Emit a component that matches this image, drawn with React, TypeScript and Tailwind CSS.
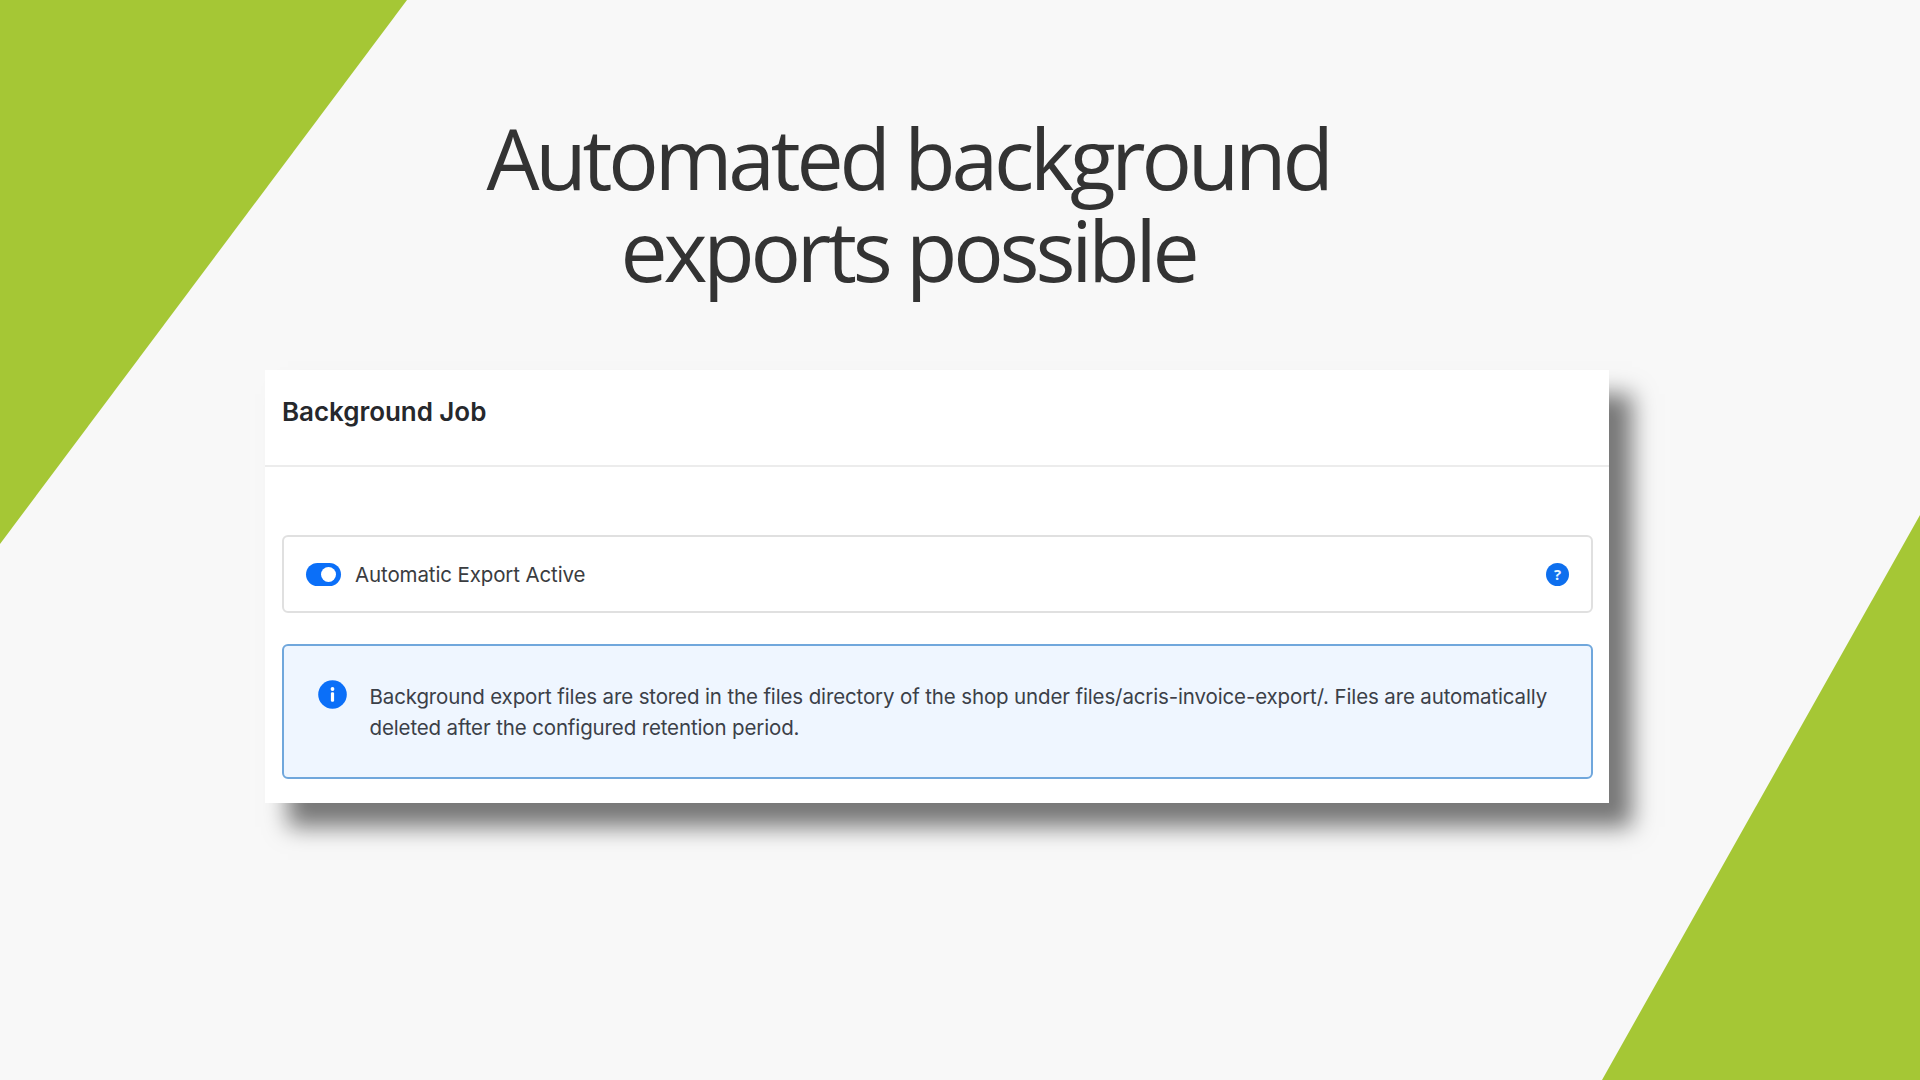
const Toggle = () => {
  return (
    <div className="mt-px flex h-[23px] w-[35px] shrink-0 items-center justify-end rounded-full bg-[#0b6ff8] pr-[5px]">
      <div className="h-[15px] w-[15px] rounded-full bg-white" />
    </div>
  );
};

const HelpIcon = () => {
  return (
    <div className="mt-px flex h-[23px] w-[23px] items-center justify-center rounded-full bg-[#0e6fee] font-['Open_Sans',sans-serif] text-[15px] font-bold leading-none text-[#e6f5ff]">
      ?
    </div>
  );
};

const InfoIcon = () => {
  return (
    <svg className="h-[29px] w-[29px] shrink-0" viewBox="0 0 29 29">
      <circle cx="14.5" cy="14.5" r="14.3" fill="#0b6ff8" />
      <circle cx="14.5" cy="9" r="1.9" fill="#fff" />
      <rect x="12.9" y="12.2" width="3.2" height="9.6" rx="1.3" fill="#fff" />
    </svg>
  );
};

const App = () => {
  return (
    <div className="relative h-[1080px] w-[1920px] overflow-hidden bg-[#f8f8f8] font-['Inter',sans-serif]">
      {/* Corner shapes */}
      <div className="absolute left-0 top-0 h-[544px] w-[407px] bg-[#a5c735] [clip-path:polygon(0_0,100%_0,0_100%)]" />
      <div className="absolute bottom-0 right-0 h-[565px] w-[318px] bg-[#a5c735] [clip-path:polygon(100%_0,100%_100%,0_100%)]" />

      <div className="relative ml-[265px] w-[1344px] pt-[112px]">
        <h1 className="mr-[58px] h-[258px] text-center font-['Open_Sans',sans-serif] text-[84px] leading-[92px] tracking-[-0.05em] text-[#333333]">
          Automated background
          <br />
          exports possible
        </h1>

        {/* Settings card */}
        <div className="h-[433px] bg-white shadow-[23px_24px_22px_rgba(0,0,0,0.52)]">
          <div className="flex h-[97px] items-start border-b-2 border-[#ececec] pl-[17px] pt-[26px]">
            <h2 className="text-[26px] font-semibold leading-[32px] tracking-[-0.05px] text-[#26282c]">Background Job</h2>
          </div>

          <div className="flex flex-col gap-[31px] pl-[17px] pr-[16px] pt-[68px]">
            <div className="flex h-[78px] items-center rounded-[6px] border-2 border-[#e0e0e0] px-[22px]">
              <Toggle />
              <span className="ml-[14px] flex-1 pt-[2px] text-[20.5px] leading-[30px] tracking-[-0.12px] text-[#3a3c40]">
                Automatic Export Active
              </span>
              <HelpIcon />
            </div>

            <div className="flex h-[135px] items-start rounded-[6px] border-2 border-[#70a7dc] bg-[#eff6ff] pl-[34px] pt-[34px]">
              <InfoIcon />
              <p className="ml-[22.5px] whitespace-nowrap pt-px text-[20.5px] leading-[31px] tracking-[-0.135px] text-[#3b4048]">
                Background export files are stored in the files directory of the shop under files/acris-invoice-export/. Files are automatically
                <br />
                deleted after the configured retention period.
              </p>
            </div>
          </div>
        </div>
      </div>
    </div>
  );
};

export default App;
